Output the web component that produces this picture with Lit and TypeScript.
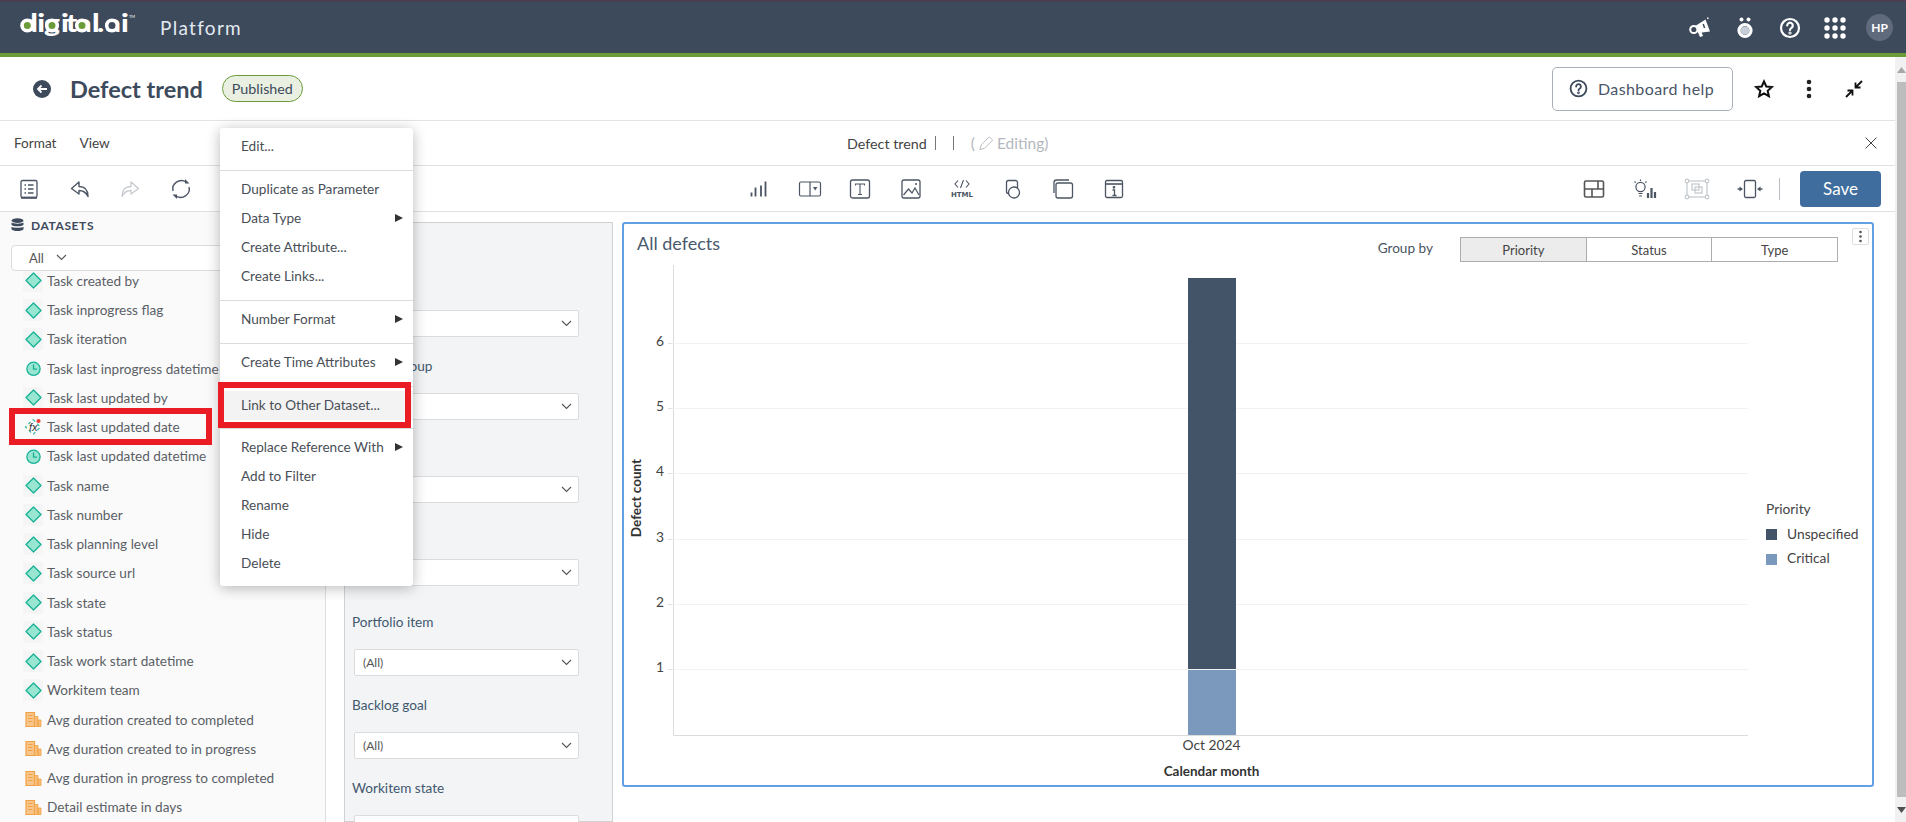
import { LitElement, html, svg, css } from "lit";
import { customElement } from "lit/decorators.js";

const diamond = html`<svg width="17" height="17" viewBox="0 0 17 17"><path d="M8.500 1 16 8.500 8.500 16 1 8.500Z" fill="#98e5d2" stroke="#17b295" stroke-width="1.300" stroke-linejoin="round"/></svg>`;
const clock = html`<svg width="17" height="17" viewBox="0 0 17 17"><circle cx="8.500" cy="8.800" r="6.600" fill="#98e5d2" stroke="#17b295" stroke-width="1.300"/><path d="M8.500 4.600v4.500h3.600" fill="none" stroke="#17b295" stroke-width="1.300"/></svg>`;
const measure = html`<svg width="17" height="17" viewBox="0 0 17 17"><path d="M1 1.500h8.500v14H1Z" fill="#f8c68a" stroke="#f0a145" stroke-width="1.200"/><path d="M9.500 5.500h3.500v10h-3.500ZM13 9h3v6.500h-3Z" fill="#f7bd79" stroke="#f0a145" stroke-width=".8"/><path d="M3 4.500h4.500M3 7.500h4.500M3 10.500h4.500" stroke="#f0a145" stroke-width="1.100"/></svg>`;
const fx = html`<svg width="18" height="18" viewBox="0 0 18 18"><path d="M9 1.500 16.500 9 9 16.500 1.500 9Z" fill="none" stroke="#2bbda2" stroke-width="1.200" stroke-dasharray="3 3"/><text x="9.200" y="13" font-family="Liberation Sans,sans-serif" font-style="italic" font-size="11" fill="#333" text-anchor="middle">fx</text><circle cx="14.500" cy="3" r="2.100" fill="#ee4035"/></svg>`;

type Row = [string, "d" | "c" | "m" | "f"];
const rows: Row[] = [
  ["Task created by", "d"], ["Task inprogress flag", "d"], ["Task iteration", "d"],
  ["Task last inprogress datetime", "c"], ["Task last updated by", "d"], ["Task last updated date", "f"],
  ["Task last updated datetime", "c"], ["Task name", "d"], ["Task number", "d"],
  ["Task planning level", "d"], ["Task source url", "d"], ["Task state", "d"], ["Task status", "d"],
  ["Task work start datetime", "d"], ["Workitem team", "d"], ["Avg duration created to completed", "m"],
  ["Avg duration created to in progress", "m"], ["Avg duration in progress to completed", "m"],
  ["Detail estimate in days", "m"],
];

const chevron = html`<svg width="11" height="7" viewBox="0 0 11 7"><path d="M1 1l4.500 4.500L10 1" fill="none" stroke="#555" stroke-width="1.100"/></svg>`;
const I = "#4b5563";

@customElement("app-root")
export class AppRoot extends LitElement {
  static styles = css`
    :host { display: block; position: relative; width: 100%; height: 822px; overflow: hidden; font-family: Lato, "Liberation Sans", sans-serif; color: #3d4a5c; background: #fff; }
    svg { display: block; flex: none; }
    .top { height: 51px; border-top: 2px solid #4c3d52; border-bottom: 4px solid #6a9c3a; background: #3d4a5c; display: flex; align-items: center; padding: 0 13px 0 18px; }
    .platform { margin-left: 12px; color: #e3e9f0; font-size: 19px; letter-spacing: 1.300px; }
    .top-right { margin-left: auto; display: flex; align-items: center; gap: 21px; }
    .avatar { width: 27px; height: 27px; border-radius: 50%; background: #5f6b7d; color: #fff; font-size: 12px; font-weight: 700; display: flex; align-items: center; justify-content: center; margin-left: -2px; }
    .below { display: flex; height: 765px; }
    main { flex: 1; min-width: 0; display: flex; flex-direction: column; }
    .scroll { width: 11px; background: #f1f1f1; display: flex; flex-direction: column; }
    .scroll .arrow { height: 25px; display: flex; align-items: center; justify-content: center; padding-left: 2px; }
    .thumb { flex: 1; margin-left: 2px; background: #bdbdbd; }
    .title-row { height: 63px; border-bottom: 1px solid #e1e3e6; display: flex; align-items: center; padding: 0 29px 0 33px; box-sizing: content-box; flex: none; }
    h1 { margin: 0 19px 0 19px; font-size: 23.500px; font-weight: 700; color: #3d4a5c; }
    .badge { height: 25px; padding: 0 9px; display: flex; align-items: center; border: 1px solid #6a9c3a; background: #e9f0e1; border-radius: 14px; font-size: 14.300px; color: #3d4a5c; }
    .help { margin-left: auto; width: 181px; height: 44px; box-sizing: border-box; border: 1px solid #a8afb8; border-radius: 5px; display: flex; align-items: center; gap: 10px; padding-left: 16px; font-size: 16px; letter-spacing: .4px; color: #4a5568; }
    .title-actions { display: flex; gap: 21px; margin-left: 19px; }
    .bar1 { height: 44px; border-bottom: 1px solid #dfe1e4; display: grid; grid-template-columns: 847px 1fr auto; align-items: center; padding-right: 18px; flex: none; font-size: 13.600px; color: #444; }
    .menus { display: flex; gap: 23px; padding-left: 14px; }
    .doc { display: flex; align-items: center; font-size: 14.300px; }
    .doc .pipe { width: 1px; height: 14px; background: #777; margin-left: 8px; }
    .doc .pipe + .pipe { margin-left: 17px; }
    .doc .editing { color: #b4b8bd; display: flex; align-items: center; margin-left: 17px; gap: 2px; font-size: 15.500px; }
    .bar2 { height: 45px; border-bottom: 1px solid #dfe1e4; display: grid; grid-template-columns: 747px auto 1fr; align-items: center; padding-right: 14px; flex: none; }
    .tools { display: flex; gap: 26.700px; }
    .tools.left { padding-left: 17px; }
    .tools.right { justify-self: end; align-items: center; gap: 27px; }
    .sep { width: 1px; height: 22px; background: #b9bdc3; margin: 0 20px 0 -11px; }
    .save { width: 81px; height: 36px; border-radius: 4px; background: #3e6d9e; color: #fff; font-size: 17px; display: flex; align-items: center; justify-content: center; margin-left: -27px; }
    .work { flex: 1; min-height: 0; display: flex; overflow: hidden; }
    .side { width: 326px; box-sizing: border-box; background: #fafafa; border-right: 1px solid #dedede; flex: none; display: flex; flex-direction: column; overflow: hidden; }
    .ds { display: flex; align-items: center; gap: 7px; padding: 3px 0 0 11px; height: 22px; font-size: 12px; font-weight: 700; letter-spacing: .6px; color: #3d4a5c; }
    .dd { position: relative; z-index: 1; height: 28px; box-sizing: border-box; margin: 10px 11px 0 11px; border: 1px solid #dcdcdc; border-radius: 4px; background: #fff; display: flex; align-items: center; padding-left: 17px; gap: 12px; font-size: 13px; color: #555; }
    .list { margin-top: -4.500px; }
    .row { height: 29.250px; display: flex; align-items: center; font-size: 13.600px; color: #5a5f66; white-space: nowrap; }
    .ico { width: 20px; height: 22px; margin-left: 23px; margin-right: 4px; display: flex; align-items: center; justify-content: center; }
    .ico.d { background: #f5f5f5; }
    .filter { width: 269px; box-sizing: border-box; margin-left: 18px; margin-top: 10px; border: 1px solid #cfd1d4; background: #f3f4f6; padding: 50px 0 0 7px; flex: none; }
    .field { margin-bottom: 19px; }
    .field.wide { margin-top: 26px; }
    .field label { display: block; height: 20px; line-height: 20px; margin-bottom: 17px; font-size: 13.600px; color: #41586e; }
    .sel { width: 225px; height: 27px; box-sizing: border-box; margin-left: 2px; border: 1px solid #dcdcdc; border-radius: 2px; background: #fff; display: flex; align-items: center; justify-content: space-between; padding: 0 6px 0 8px; font-size: 12px; color: #555; }
    .panel { position: relative; width: 1252px; height: 565px; box-sizing: border-box; margin: 10px 0 0 9px; border: 2px solid #62a0e4; border-radius: 3px; background: #fff; flex: none; display: flex; flex-direction: column; }
    .phead { height: 41px; display: flex; align-items: flex-start; padding: 0 34px 0 13px; flex: none; }
    .ptitle { font-size: 18px; line-height: 26px; margin-top: 6px; color: #4a5a6c; }
    .gb { margin-left: auto; margin-top: 14px; line-height: 20px; font-size: 13.600px; color: #4a5560; }
    .seg { margin: 13px 0 0 27px; width: 378px; height: 25px; box-sizing: border-box; border: 1px solid #adadad; display: flex; font-size: 13px; color: #444; }
    .seg div { flex: 1; display: flex; align-items: center; justify-content: center; }
    .seg div + div { border-left: 1px solid #adadad; }
    .seg .on { background: #ececec; }
    .kebab { position: absolute; right: 3px; top: 4px; width: 17px; height: 17px; box-sizing: border-box; border: 1px solid #dedede; border-radius: 2px; display: flex; align-items: center; justify-content: center; background: #fff; }
    .chart text { font-family: Lato, "Liberation Sans", sans-serif; font-size: 13.800px; fill: #444; }
    .chart text.b { font-size: 13.500px; font-weight: 700; fill: #333; }
    .menu { position: absolute; left: 220px; top: 128px; width: 193px; height: 458px; box-sizing: border-box; padding: 3.800px 0 8px; background: #fff; border-radius: 3px; box-shadow: 0 2px 14px rgba(0,0,0,.28); z-index: 5; }
    .mi { height: 29px; display: flex; align-items: center; justify-content: space-between; padding: 0 10px 0 21px; font-size: 13.600px; color: #4a4f57; white-space: nowrap; }
    .mi.hl { background: #f3f3f3; }
    .ms { height: 1px; background: #dcdcdc; margin: 9px 0 4px; }
    .ms.s { margin: 8px 0 4px; }
    .tri { width: 0; height: 0; border-left: 8px solid #333; border-top: 4px solid transparent; border-bottom: 4px solid transparent; }
    .mark { position: absolute; box-sizing: border-box; border: 6px solid #ea1c24; z-index: 6; pointer-events: none; }
    .mark.a { left: 218px; top: 382px; width: 193px; height: 46px; }
    .mark.b { left: 9px; top: 408px; width: 203px; height: 37px; }
  `;

  render() {
    const W = "#fff";
    const rowIco = (k: string) => k === "d" ? diamond : k === "c" ? clock : k === "m" ? measure : fx;
    const fields: [string, boolean][] = [["Project", false], ["Project group", false], ["Sprint", false], ["Team", false], ["Portfolio item", true], ["Backlog goal", false], ["Workitem state", false]];
    const grids: [number, string][] = [[404, "1"], [339, "2"], [274, "3"], [208, "4"], [143, "5"], [78, "6"]];
    return html`
      <header class="top">
        <svg width="130" height="36" viewBox="0 0 130 36">
          <g transform="scale(1.25 1)"><text x="2.200 15.400 20.800 34.400 38.400 46.600 59.200 63.200 70 82.400" y="21.500" font-family="Lato, sans-serif" font-weight="900" font-size="24" fill="#fff">digital.ai</text></g>
          <circle cx="9.300" cy="15.500" r="5.300" fill="#6a9c3a" stroke="#fff" stroke-width="3.600"/>
          <circle cx="34" cy="15.500" r="5.300" fill="#6a9c3a" stroke="#fff" stroke-width="3.600"/>
          <circle cx="64" cy="15.500" r="5.300" fill="#6a9c3a" stroke="#fff" stroke-width="3.600"/>
          <circle cx="94" cy="15.500" r="5.300" fill="#3d4a5c" stroke="#fff" stroke-width="3.600"/>
          <text x="111" y="8" font-family="Lato, sans-serif" font-size="4" fill="#fff">TM</text>
        </svg>
        <span class="platform">Platform</span>
        <div class="top-right">
          <svg width="24" height="24" viewBox="0 0 24 24"><path d="M8 9.500 17.500 3.500 22 15.500 10 17Z" fill=${W}/><circle cx="5.800" cy="13.500" r="3.600" fill="none" stroke=${W} stroke-width="2"/><path d="M10 16.500l2 4.500 3-1-1.500-4Z" fill=${W}/><path d="M15.200 8l1.400 4" stroke="#3d4a5c" stroke-width="1.500"/><path d="M19.500 3l.6-1.500" stroke=${W} stroke-width="1.500"/></svg>
          <svg width="24" height="24" viewBox="0 0 24 24"><circle cx="8.500" cy="3.500" r="2" fill=${W}/><circle cx="15.500" cy="3.500" r="2" fill=${W}/><circle cx="12" cy="14.500" r="6" fill="none" stroke=${W} stroke-width="3.200"/><circle cx="12" cy="14.500" r="4.300" fill="#c7ced8"/></svg>
          <svg width="24" height="24" viewBox="0 0 24 24" fill="none" stroke=${W} stroke-width="2.200" stroke-linecap="round"><circle cx="12" cy="12" r="9"/><path d="M9.200 9.500a2.800 2.800 0 1 1 4.300 2.400c-1 .6-1.500 1.100-1.500 2.200"/><circle cx="12" cy="17" r=".5"/></svg>
          <svg width="24" height="24" viewBox="0 0 24 24" fill=${W}>${[4, 12, 20].map(y => [4, 12, 20].map(x => svg`<circle cx=${x} cy=${y} r="2.700"></circle>`))}</svg>
          <div class="avatar">HP</div>
        </div>
      </header>
      <div class="below">
        <main>
          <div class="title-row">
            <svg width="18" height="18" viewBox="0 0 18 18"><circle cx="9" cy="9" r="9" fill="#3d4a5c"/><path d="M14 9H5M8.500 5.500 5 9l3.500 3.500" fill="none" stroke="#fff" stroke-width="1.800"/></svg>
            <h1>Defect trend</h1>
            <span class="badge">Published</span>
            <div class="help">
              <svg width="19" height="19" viewBox="0 0 24 24" fill="none" stroke="#3d4a5c" stroke-width="2.300" stroke-linecap="round"><circle cx="12" cy="12" r="10"/><path d="M9 9.500a3 3 0 1 1 4.600 2.500c-1 .6-1.600 1.100-1.600 2.300"/><circle cx="12" cy="17.500" r=".6"/></svg>
              Dashboard help
            </div>
            <div class="title-actions">
              <svg width="24" height="24" viewBox="0 0 24 24"><path d="M12 4.500l2.300 5 5.500.6-4.100 3.700 1.200 5.400-4.900-2.800-4.900 2.800 1.200-5.400-4.100-3.700 5.500-.6Z" fill="none" stroke="#111" stroke-width="2"/></svg>
              <svg width="24" height="24" viewBox="0 0 24 24" fill="#222"><circle cx="12" cy="5" r="2.300"/><circle cx="12" cy="12" r="2.300"/><circle cx="12" cy="19" r="2.300"/></svg>
              <svg width="24" height="24" viewBox="0 0 24 24" fill="none" stroke="#111" stroke-width="1.800"><path d="M20 4l-6 6M13.500 5.500v5h5M4 20l6-6M5.500 13.500h5v5"/></svg>
            </div>
          </div>
          <div class="bar1">
            <div class="menus"><span>Format</span><span>View</span></div>
            <div class="doc">
              <span>Defect trend</span><i class="pipe"></i><i class="pipe"></i>
              <span class="editing">(
                <svg width="18" height="18" viewBox="0 0 19 18" fill="none" stroke="#b4b8bd"><path d="M3 16l1.500-5L13 2.500 16.500 6 8 14.500Z"/></svg>
                Editing)</span>
            </div>
            <svg width="12" height="12" viewBox="0 0 12 12" stroke="#444" stroke-width="1"><path d="M.5.500l11 11M11.500.500l-11 11"/></svg>
          </div>
          <div class="bar2">
            <div class="tools left">
              <svg width="24" height="24" viewBox="0 0 24 24" fill="none" stroke=${I} stroke-width="1.300"><rect x="4" y="3.500" width="16" height="17" rx="1.500"/><path d="M4 20.800h16" stroke-width="2"/><path d="M7.500 8h1.500M7.500 12h1.500M7.500 16h1.500M11 8h5.500M11 12h5.500M11 16h5.500"/></svg>
              <svg width="24" height="24" viewBox="0 0 24 24" fill="none" stroke=${I} stroke-width="1.400" stroke-linejoin="round"><path d="M11 5 3.500 11.500 11 17v-3.500c3.500 0 6.500.8 9 6 0-6-3-10-9-10Z"/></svg>
              <svg width="24" height="24" viewBox="0 0 24 24" fill="none" stroke="#c7cbd0" stroke-width="1.300" stroke-linejoin="round"><path d="M13 5l7.500 6.500L13 17v-3.500c-3.500 0-6.500.8-9 6 0-6 3-10 9-10Z"/></svg>
              <svg width="24" height="24" viewBox="0 0 24 24" fill="none" stroke=${I} stroke-width="1.400"><path d="M4 14a8.500 8.500 0 0 1 13-9M20 10a8.500 8.500 0 0 1-13 9"/><path d="M16 2v4.500h4.500L16 2ZM8 22v-4.500H3.500L8 22Z" fill=${I} stroke="none"/></svg>
            </div>
            <div class="tools">
              <svg width="24" height="24" viewBox="0 0 24 24" stroke=${I} stroke-width="1.800"><path d="M4.500 19.500v-4M8.500 19.500v-9M14 19.500v-11M18.500 19.500V4.500"/></svg>
              <svg width="24" height="24" viewBox="0 0 24 24" fill="none" stroke=${I} stroke-width="1.200"><rect x="1.500" y="5" width="21" height="14" rx="1.500"/><path d="M12 5v14"/><path d="M15 10h4.400l-2.200 3.500Z" fill=${I} stroke="none"/></svg>
              <svg width="24" height="24" viewBox="0 0 24 24" fill="none" stroke=${I} stroke-width="1.300"><rect x="2.500" y="3" width="19" height="18" rx="2"/><path d="M7.500 8.500V7h9v1.500M12 7v10.500M10 17.500h4" stroke-width="1.100"/></svg>
              <svg width="24" height="24" viewBox="0 0 24 24" fill="none" stroke=${I} stroke-width="1.300"><rect x="3" y="3" width="18" height="18" rx="2"/><path d="M4.500 18l5-6 3.500 4 3-5 4 7" stroke-width="1.200"/><circle cx="17" cy="7" r="1" fill=${I} stroke="none"/></svg>
              <svg width="24" height="24" viewBox="0 0 24 24"><path d="M8 3.500 5 7l3 3.500M16 3.500 19 7l-3 3.500M13.500 3 10.500 11" fill="none" stroke=${I} stroke-width="1.100"/><text x="12" y="20" text-anchor="middle" font-family="DejaVu Sans, sans-serif" font-weight="700" font-size="7" fill=${I}>HTML</text></svg>
              <svg width="24" height="24" viewBox="0 0 24 24" fill="none" stroke=${I} stroke-width="1.300"><rect x="6.500" y="3.500" width="11" height="13" rx="2"/><circle cx="14" cy="15.500" r="5.500" fill="#fff"/></svg>
              <svg width="24" height="24" viewBox="0 0 24 24" fill="none" stroke=${I} stroke-width="1.300"><path d="M3 16V5.500C3 4 4 3 5.500 3H18"/><rect x="5" y="6" width="16.500" height="15" rx="2"/></svg>
              <svg width="24" height="24" viewBox="0 0 24 24" fill="none" stroke=${I} stroke-width="1.300"><rect x="3.500" y="3.500" width="17" height="17" rx="1.500"/><path d="M3.500 7h17" stroke-width="1.600"/><path d="M10.500 13H12.500V18.500M10.500 18.500h4"/><circle cx="12" cy="10.300" r=".7" fill=${I}/></svg>
            </div>
            <div class="tools right">
              <svg width="24" height="24" viewBox="0 0 24 24" fill="none" stroke="#555" stroke-width="1.600"><rect x="2.500" y="4" width="19" height="16" rx="1.500"/><path d="M2.500 12h19M16 4v8M10 12v8"/></svg>
              <svg width="24" height="24" viewBox="0 0 24 24" fill="none" stroke=${I} stroke-width="1.200"><circle cx="7.500" cy="10" r="4.600"/><path d="M5.500 16.500h4M6 19h3M7.500 2.500v1.500M1.500 4.500l1.200 1.200M13.500 4.500l-1.200 1.200"/><path d="M15 21v-5M18.500 21V11M22 21v-6" stroke-width="2.200"/></svg>
              <svg width="26" height="24" viewBox="0 0 26 24" fill="none" stroke="#c4c8cc" stroke-width="1.200"><rect x="3" y="4" width="20" height="16"/><rect x="8" y="7" width="7" height="6"/><rect x="11" y="10" width="7" height="6"/><g fill="#fff"><circle cx="3" cy="4" r="1.800"/><circle cx="23" cy="4" r="1.800"/><circle cx="3" cy="20" r="1.800"/><circle cx="23" cy="20" r="1.800"/></g></svg>
              <svg width="26" height="24" viewBox="0 0 26 24" fill="none" stroke=${I} stroke-width="1.300"><rect x="7.500" y="3.500" width="11" height="17" rx="1.500"/><path d="M.5 12H3M25.500 12H23"/><path d="M2.500 9.500l3.500 2.500-3.500 2.500ZM23.500 9.500 20 12l3.500 2.500Z" fill=${I} stroke="none"/></svg>
              <i class="sep"></i>
              <div class="save">Save</div>
            </div>
          </div>
          <div class="work">
            <aside class="side">
              <div class="ds">
                <svg width="13" height="14" viewBox="0 0 13 14" fill="#3d4a5c"><ellipse cx="6.500" cy="2.600" rx="6" ry="2.300"/><path d="M.5 4.500c1.500 1.500 10.500 1.500 12 0v2.200c-1.500 2-10.500 2-12 0ZM.5 8.700c1.500 1.500 10.500 1.500 12 0v2.500c-1.500 2.400-10.500 2.400-12 0Z"/></svg>
                DATASETS
              </div>
              <div class="dd"><span>All</span>${chevron}</div>
              <div class="list">
                ${rows.map(([t, k]) => html`<div class="row"><span class="ico ${k}">${rowIco(k)}</span>${t}</div>`)}
              </div>
            </aside>
            <section class="filter">
              ${fields.map(([l, wide]) => html`<div class="field ${wide ? "wide" : ""}"><label>${l}</label><div class="sel"><span>(All)</span>${chevron}</div></div>`)}
            </section>
            <section class="panel">
              <div class="phead">
                <span class="ptitle">All defects</span>
                <span class="gb">Group by</span>
                <div class="seg"><div class="on">Priority</div><div>Status</div><div>Type</div></div>
              </div>
              <div class="kebab"><svg width="3" height="13" viewBox="0 0 3 13" fill="#555"><circle cx="1.500" cy="2" r="1.300"/><circle cx="1.500" cy="6.500" r="1.300"/><circle cx="1.500" cy="11" r="1.300"/></svg></div>
              <svg class="chart" width="1248" height="520" viewBox="0 0 1248 520">
                <path d="M49.500 0V470.500H1124" fill="none" stroke="#dcdcdc"/>
                ${grids.map(([y, l]) => svg`
                  <path d="M49 ${y + .5}H1124" stroke="#f2f2f2"></path>
                  <path d="M44 ${y + .5}H49" stroke="#e3e3e3"></path>
                  <text x="40" y=${y + 3} text-anchor="end">${l}</text>`)}
                <rect x="564" y="13" width="48" height="391" fill="#445468"/>
                <rect x="564" y="405" width="48" height="65" fill="#7a99bc"/>
                <text x="587.500" y="485" text-anchor="middle">Oct 2024</text>
                <text class="b" x="587.500" y="511" text-anchor="middle">Calendar month</text>
                <text class="b" transform="translate(17,233) rotate(-90)" text-anchor="middle">Defect count</text>
                <text x="1142" y="249">Priority</text>
                <rect x="1142" y="264" width="11" height="11" fill="#445468"/>
                <text x="1163" y="274">Unspecified</text>
                <rect x="1142" y="289" width="11" height="11" fill="#7a99bc"/>
                <text x="1163" y="298">Critical</text>
              </svg>
            </section>
          </div>
        </main>
        <div class="scroll">
          <div class="arrow"><svg width="9" height="6" viewBox="0 0 9 6"><path d="M4.500 0 9 6H0Z" fill="#a8a8a8"/></svg></div>
          <div class="thumb"></div>
          <div class="arrow"><svg width="9" height="6" viewBox="0 0 9 6"><path d="M4.500 6 9 0H0Z" fill="#505050"/></svg></div>
        </div>
      </div>
      <div class="menu">
        <div class="mi">Edit...</div>
        <div class="ms"></div>
        <div class="mi">Duplicate as Parameter</div>
        <div class="mi">Data Type<i class="tri"></i></div>
        <div class="mi">Create Attribute...</div>
        <div class="mi">Create Links...</div>
        <div class="ms"></div>
        <div class="mi">Number Format<i class="tri"></i></div>
        <div class="ms"></div>
        <div class="mi">Create Time Attributes<i class="tri"></i></div>
        <div class="ms"></div>
        <div class="mi hl">Link to Other Dataset...</div>
        <div class="ms s"></div>
        <div class="mi">Replace Reference With<i class="tri"></i></div>
        <div class="mi">Add to Filter</div>
        <div class="mi">Rename</div>
        <div class="mi">Hide</div>
        <div class="mi">Delete</div>
      </div>
      <div class="mark a"></div>
      <div class="mark b"></div>
    `;
  }
}
